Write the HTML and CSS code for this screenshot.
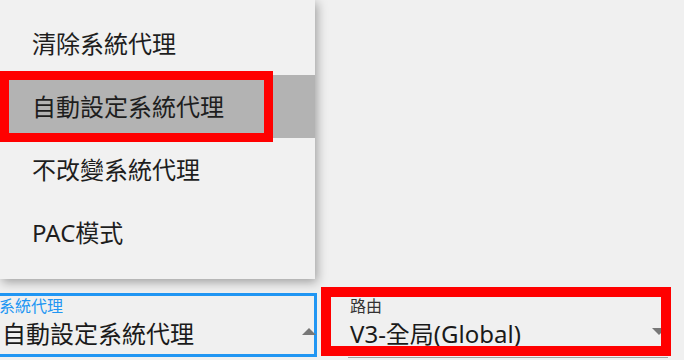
FILE: index.html
```html
<!DOCTYPE html>
<html lang="zh-Hant">
<head>
<meta charset="utf-8">
<link rel="stylesheet" href="styles.css">
</head>
<body>
<div class="stage">
  <div class="menu">
    <div class="item">清除系統代理</div>
    <div class="item active">自動設定系統代理</div>
    <div class="item">不改變系統代理</div>
    <div class="item">PAC模式</div>
  </div>

  <div class="combos">
    <div class="combo focused">
      <div class="combo-text">
        <div class="label">系統代理</div>
        <div class="value">自動設定系統代理</div>
      </div>
      <span class="arrow up"></span>
    </div>
    <div class="combo plain">
      <div class="combo-text">
        <div class="label">路由</div>
        <div class="value">V3-全局(Global)</div>
      </div>
      <span class="arrow down"></span>
    </div>
  </div>

  <div class="mark mark-menu"></div>
  <div class="mark mark-route"></div>
</div>
</body>
</html>
```

FILE: styles.css
```css
html, body {
  margin: 0;
  padding: 0;
  background: #f0f0f0;
}

body {
  width: 684px;
  height: 360px;
  overflow: hidden;
  font-family: "Noto Sans", "Noto Sans CJK TC", sans-serif;
  color: #1e1e1e;
}

.stage {
  position: relative;
  width: 684px;
  height: 360px;
}

/* popup menu */
.menu {
  position: absolute;
  left: 0;
  top: 0;
  width: 315px;
  padding: 12px 0 15px;
  background: #f1f1f1;
  box-shadow: 2px 3px 10px rgba(0, 0, 0, 0.35);
  z-index: 2;
}

.item {
  height: 63px;
  line-height: 63px;
  padding-left: 32px;
  font-size: 24px;
  white-space: nowrap;
}

.item.active {
  background: #b3b3b3;
}

/* combo boxes row */
.combos {
  position: absolute;
  left: -6px;
  top: 293px;
  display: flex;
  gap: 31px;
}

.combo {
  display: flex;
  align-items: flex-start;
  width: 320px;
  height: 64px;
  box-sizing: border-box;
}

.combo.focused {
  border: 3px solid #2196f3;
  width: 323px;
  padding-left: 5px;
}

.combo.plain {
  border-top: 3px solid transparent;
  border-bottom: 1px solid #a0a0a0;
  padding-left: 2px;
  height: 65px;
}

.combo-text {
  flex: 1;
  min-width: 0;
}

.label {
  font-size: 16px;
  line-height: 20px;
  white-space: nowrap;
}

.focused .label {
  color: #2196f3;
  margin-left: -3px;
}

.plain .label {
  color: #333;
}

.value {
  margin-top: 3px;
  font-size: 24px;
  line-height: 30px;
  white-space: nowrap;
  color: #1a1a1a;
}

.arrow {
  width: 0;
  height: 0;
  margin-top: 32px;
  border-left: 7px solid transparent;
  border-right: 7px solid transparent;
}

.arrow.up {
  border-bottom: 7px solid #777;
  margin-right: -2px;
}

.arrow.down {
  border-top: 7px solid #777;
  margin-right: 2px;
}

/* red annotation rectangles */
.mark {
  position: absolute;
  box-sizing: border-box;
  border: 9px solid #ff0000;
  z-index: 3;
}

.mark-menu {
  left: 0;
  top: 71px;
  width: 273px;
  height: 71px;
}

.mark-route {
  left: 321px;
  top: 287px;
  width: 350px;
  height: 69px;
  border-width: 10px;
}
```
